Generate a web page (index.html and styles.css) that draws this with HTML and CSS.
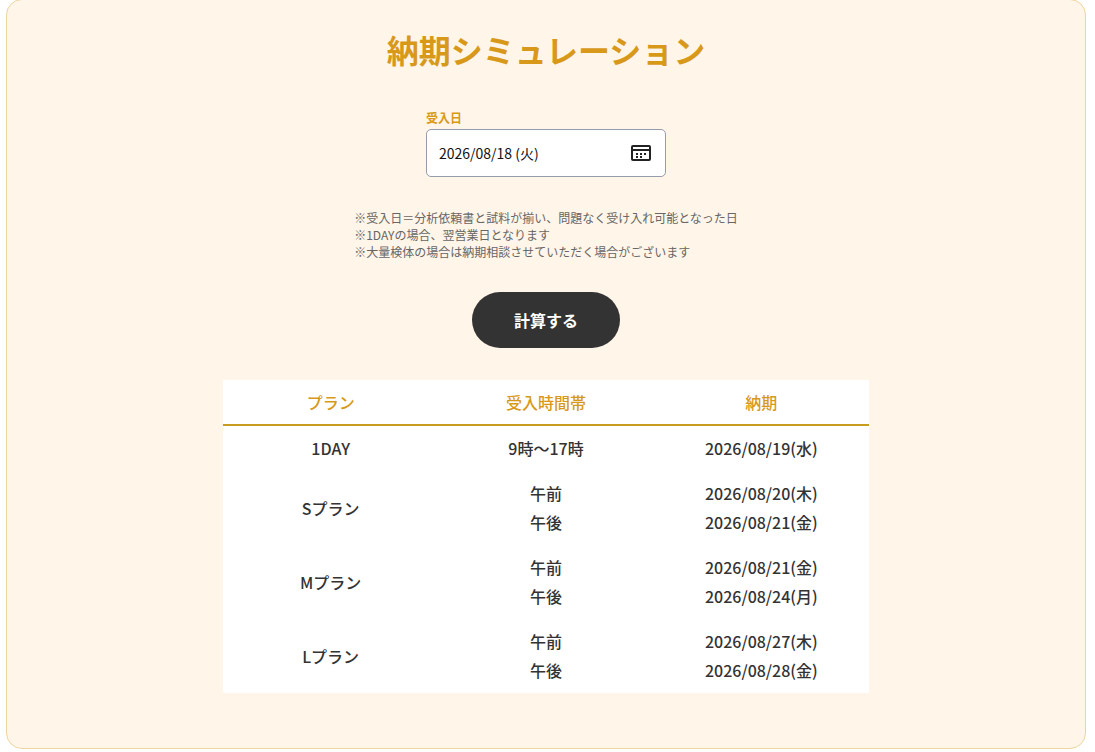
FILE: index.html
```html
<!DOCTYPE html>
<html lang="ja">
<head>
    <meta charset="UTF-8">
    <meta name="viewport" content="width=device-width, initial-scale=1.0">
    <title>納期シミュレーション</title>
    <link rel="stylesheet" href="styles.css">
</head>
<body>
    <main class="simulation">
        <h1 class="title">納期シミュレーション</h1>

        <form class="date-form" id="dateForm">
            <div class="field">
                <label for="receiptDate">受入日</label>
                <div class="date-box">
                    <input type="text" id="receiptDate" name="receiptDate" value="2026/08/18 (火)">
                    <button type="button" class="calendar-button" aria-label="カレンダーを開く">
                        <svg width="20" height="16" viewBox="0 0 20 16" aria-hidden="true">
                            <rect x="1" y="1" width="18" height="14" rx="1" fill="none" stroke="#222" stroke-width="2"/>
                            <path d="M1 5h18" stroke="#222" stroke-width="2"/>
                            <path d="M5 8h2v2H5zM9 8h2v2H9zM13 8h2v2h-2zM5 11h2v2H5zM9 11h2v2H9z" fill="#222"/>
                        </svg>
                    </button>
                </div>
            </div>

            <p class="notes">
                ※受入日＝分析依頼書と試料が揃い、問題なく受け入れ可能となった日<br>
                ※1DAYの場合、翌営業日となります<br>
                ※大量検体の場合は納期相談させていただく場合がございます
            </p>

            <button type="button" class="submit-button">計算する</button>
        </form>

        <table class="result">
            <thead>
                <tr>
                    <th scope="col">プラン</th>
                    <th scope="col">受入時間帯</th>
                    <th scope="col">納期</th>
                </tr>
            </thead>
            <tbody>
                <tr>
                    <td>1DAY</td>
                    <td>9時～17時</td>
                    <td>2026/08/19(水)</td>
                </tr>
                <tr>
                    <td>Sプラン</td>
                    <td>午前<br>午後</td>
                    <td>2026/08/20(木)<br>2026/08/21(金)</td>
                </tr>
                <tr>
                    <td>Mプラン</td>
                    <td>午前<br>午後</td>
                    <td>2026/08/21(金)<br>2026/08/24(月)</td>
                </tr>
                <tr>
                    <td>Lプラン</td>
                    <td>午前<br>午後</td>
                    <td>2026/08/27(木)<br>2026/08/28(金)</td>
                </tr>
            </tbody>
        </table>
    </main>
</body>
</html>
```

FILE: styles.css
```css
* {
    box-sizing: border-box;
}
body {
    margin: 0;
    background-color: #fff;
    color: #333;
    font-family: "Noto Sans CJK JP", sans-serif;
    font-size: 16px;
}
.simulation {
    display: flex;
    flex-direction: column;
    align-items: center;
    gap: 32px;
    margin: -1px 9px 0 6px;
    padding: 25px 16px 55px;
    background-color: #fff5e8;
    border: 1px solid #ecd6a0;
    border-radius: 16px;
}
.title {
    margin: 0 0 4px;
    color: #d8991a;
    font-size: 32px;
    font-weight: bold;
    line-height: 48px;
}
.date-form {
    display: flex;
    flex-direction: column;
    align-items: center;
    gap: 32px;
}
.field {
    display: flex;
    flex-direction: column;
    gap: 2px;
    width: 240px;
}
.field label {
    color: #d8991a;
    font-size: 12px;
    font-weight: bold;
    line-height: 18px;
}
.date-box {
    display: flex;
    align-items: center;
    height: 48px;
    padding: 0 12px;
    background-color: #fff;
    border: 1px solid #959cab;
    border-radius: 5px;
}
.date-box input {
    flex: 1;
    min-width: 0;
    padding: 0;
    border: none;
    background: none;
    color: #111;
    font-family: inherit;
    font-size: 14px;
}
.calendar-button {
    display: flex;
    padding: 0 2px;
    border: none;
    background: none;
    cursor: pointer;
}
.notes {
    margin: 0;
    color: #666;
    font-size: 12px;
    line-height: 17px;
}
.submit-button {
    padding: 16px 42px;
    border: none;
    border-radius: 28px;
    background-color: #333;
    color: #fff;
    font-family: inherit;
    font-size: 16px;
    font-weight: bold;
    line-height: 24px;
    cursor: pointer;
}
.submit-button:hover {
    background-color: #555;
}
.result {
    width: 100%;
    max-width: 646px;
    table-layout: fixed;
    border-collapse: collapse;
    background-color: #fff;
    font-weight: 500;
    line-height: 29px;
    text-align: center;
}
.result th,
.result td {
    padding: 8px;
}
.result th {
    padding-bottom: 7px;
    color: #d8991a;
    font-weight: 500;
    border-bottom: 2px solid #c79d20;
}
```
